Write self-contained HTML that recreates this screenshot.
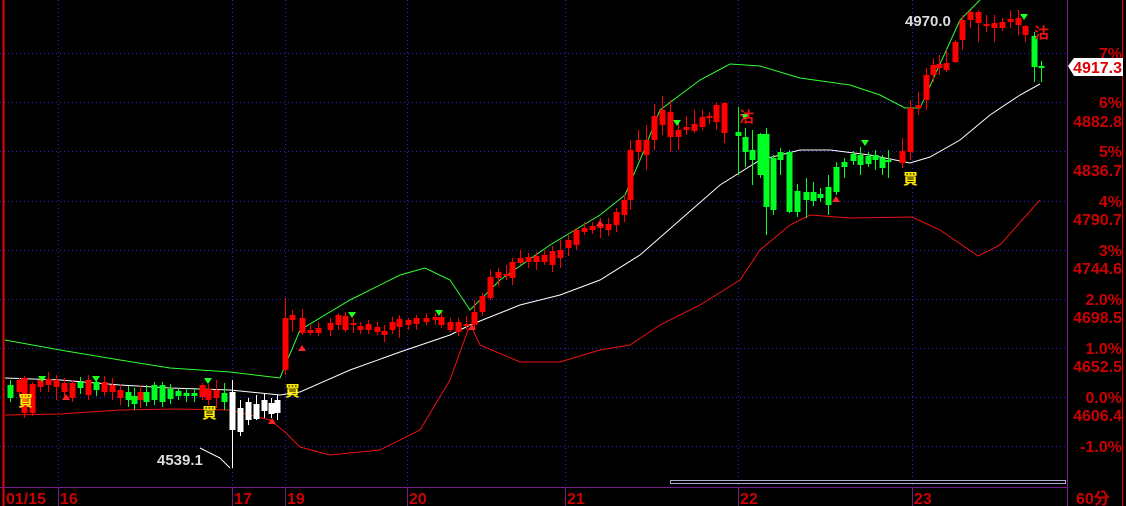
<!DOCTYPE html>
<html><head><meta charset="utf-8"><style>
html,body{margin:0;padding:0;background:#000;width:1126px;height:506px;overflow:hidden}
svg{display:block}
text{font-family:"Liberation Sans","Noto Sans CJK TC",sans-serif;font-weight:bold}
</style></head><body>
<svg id="s" width="1126" height="506" xmlns="http://www.w3.org/2000/svg">
<rect width="1126" height="506" fill="#000"/>
<g stroke="#2222dd" stroke-width="1" stroke-dasharray="1,3">
<line x1="0" y1="53.5" x2="1067" y2="53.5"/><line x1="0" y1="102.5" x2="1067" y2="102.5"/>
<line x1="0" y1="151.5" x2="1067" y2="151.5"/><line x1="0" y1="201.5" x2="1067" y2="201.5"/>
<line x1="0" y1="250.5" x2="1067" y2="250.5"/><line x1="0" y1="299.5" x2="1067" y2="299.5"/>
<line x1="0" y1="348.5" x2="1067" y2="348.5"/><line x1="0" y1="397.5" x2="1067" y2="397.5"/>
<line x1="0" y1="446.5" x2="1067" y2="446.5"/>
<line x1="58.5" y1="0" x2="58.5" y2="487"/><line x1="232.5" y1="0" x2="232.5" y2="487"/>
<line x1="285.5" y1="0" x2="285.5" y2="487"/><line x1="407.5" y1="0" x2="407.5" y2="487"/>
<line x1="565.5" y1="0" x2="565.5" y2="487"/><line x1="738.5" y1="0" x2="738.5" y2="487"/>
<line x1="912.5" y1="0" x2="912.5" y2="487"/>
</g>
<line x1="3.5" y1="0" x2="3.5" y2="506" stroke="#e00" stroke-width="2"/>
<line x1="0" y1="487.5" x2="1067" y2="487.5" stroke="#7a1a8a"/>
<line x1="1067.5" y1="0" x2="1067.5" y2="506" stroke="#7a1a8a"/>
<line x1="1122.5" y1="0" x2="1122.5" y2="506" stroke="#e00"/>
<g stroke="#7a1a8a"><line x1="58.5" y1="487" x2="58.5" y2="506"/><line x1="232.5" y1="487" x2="232.5" y2="506"/><line x1="285.5" y1="487" x2="285.5" y2="506"/><line x1="407.5" y1="487" x2="407.5" y2="506"/><line x1="565.5" y1="487" x2="565.5" y2="506"/><line x1="738.5" y1="487" x2="738.5" y2="506"/><line x1="912.5" y1="487" x2="912.5" y2="506"/></g>
<rect x="670.5" y="480.5" width="395" height="3" fill="none" stroke="#aac" />
<polyline fill="none" stroke="#33ff33" points="5,340 60,350 120,360 170,368 230,372 280,378 300,330 350,300 400,275 425,268 450,280 470,310 500,280 550,245 600,215 625,195 640,160 660,110 700,80 730,64 760,66 800,78 850,85 880,95 905,108 920,108 960,20 980,0"/>
<polyline fill="none" stroke="#ee1111" points="5,415 60,414 120,410 175,409 230,410 270,420 285,432 300,447 330,455 380,450 420,430 450,380 468,330 472,328 480,345 520,362 560,362 600,350 630,345 660,325 700,305 740,280 760,250 790,225 810,215 850,218 912,217 940,230 978,256 1000,245 1040,200"/>
<polyline fill="none" stroke="#fff" points="5,378 60,380 120,385 170,388 230,390 280,395 300,392 350,370 400,352 450,335 470,325 520,305 560,295 600,280 640,255 680,220 720,185 760,160 800,150 830,150 870,155 910,163 930,157 960,140 990,115 1020,95 1040,84"/>
<g id="c"></g>
<g fill="#22ff22"><polygon points="38,376 46,376 42,382"/><polygon points="92,376 100,376 96,382"/><polygon points="204,378 212,378 208,384"/><polygon points="348,312 356,312 352,318"/><polygon points="435,310 443,310 439,316"/><polygon points="673,120 681,120 677,126"/><polygon points="741,114 749,114 745,120"/><polygon points="861,140 869,140 865,146"/><polygon points="1020,14 1028,14 1024,20"/></g>
<g fill="#ff2222"><polygon points="62,400 70,400 66,394"/><polygon points="298,351 306,351 302,345"/><polygon points="468,330 476,330 472,324"/><polygon points="596,226 604,226 600,220"/><polygon points="832,202 840,202 836,196"/><polygon points="268,424 276,424 272,418"/></g>
<polyline points="200,448 220,458 230,468" fill="none" stroke="#fff"/>
<text x="157" y="465" fill="#ddd" font-size="15">4539.1</text>
<text x="905" y="26" fill="#ddd" font-size="15">4970.0</text>
<g fill="#ffee00" font-size="15"><text x="18" y="406">買</text><text x="202" y="418">買</text><text x="285" y="396">買</text><text x="903" y="184">買</text></g>
<g fill="#ee1111" font-size="15"><text x="739" y="122">沽</text><text x="1034" y="38">沽</text></g>
<g fill="#cc0000" font-size="16" text-anchor="end">
<text x="1122" y="59">7%</text><text x="1122" y="108">6%</text><text x="1122" y="127">4882.8</text>
<text x="1122" y="157">5%</text><text x="1122" y="176">4836.7</text>
<text x="1122" y="207">4%</text><text x="1122" y="225">4790.7</text>
<text x="1122" y="256">3%</text><text x="1122" y="274">4744.6</text>
<text x="1122" y="305">2.0%</text><text x="1122" y="323">4698.5</text>
<text x="1122" y="354">1.0%</text><text x="1122" y="372">4652.5</text>
<text x="1122" y="403">0.0%</text><text x="1122" y="421">4606.4</text>
<text x="1122" y="452">-1.0%</text>
</g>
<polygon points="1068,66 1074,58 1123,58 1123,76 1074,76" fill="#fff"/>
<text x="1122" y="73" fill="#dd0000" font-size="16" text-anchor="end">4917.3</text>
<g fill="#cc0000" font-size="16"><text x="6" y="504">01/15</text><text x="60" y="504">16</text><text x="234" y="504">17</text><text x="287" y="504">19</text><text x="409" y="504">20</text><text x="567" y="504">21</text><text x="740" y="504">22</text><text x="914" y="504">23</text><text x="1076" y="504">60分</text></g>
</svg>
<script>
var d=[[10,385,398,380,402,'g'],[19,380,392,378,396,'r'],[24,378,413,376,418,'r'],[32,384,413,382,416,'r'],[40,380,387,376,392,'r'],[48,379,385,372,392,'r'],[56,380,387,375,400,'r'],[64,383,392,378,398,'r'],[72,383,398,380,402,'r'],[80,382,388,377,394,'g'],[88,380,395,375,400,'r'],[96,382,390,376,396,'g'],[104,382,392,376,396,'r'],[112,385,392,378,400,'r'],[120,390,398,385,405,'r'],[128,392,400,386,407,'g'],[134,396,404,388,410,'g'],[140,392,400,385,408,'r'],[146,392,402,385,406,'g'],[154,385,400,382,405,'g'],[162,385,402,382,407,'g'],[170,389,399,384,404,'g'],[178,391,396,388,400,'g'],[186,393,396,388,402,'g'],[194,393,396,388,402,'g'],[202,385,397,383,400,'r'],[208,389,400,384,405,'r'],[216,390,398,380,408,'r'],[224,393,402,383,410,'g'],
[232,392,430,380,468,'w'],[240,408,432,400,436,'w'],[248,402,420,398,425,'w'],[256,404,419,395,420,'w'],[264,400,411,393,418,'w'],[271,403,414,398,418,'w'],[277,400,413,395,420,'w'],
[285,318,370,298,375,'r'],[292,315,320,310,332,'r'],[302,318,333,309,335,'r'],[310,330,333,325,335,'r'],[318,328,333,322,336,'r'],[330,323,330,318,336,'r'],[338,315,325,313,330,'r'],[345,316,330,312,332,'r'],[353,323,325,318,333,'r'],[360,326,330,322,334,'r'],[368,324,330,320,334,'r'],[377,327,332,322,335,'r'],[384,331,335,325,342,'r'],[392,322,330,317,334,'r'],[399,319,327,315,338,'r'],[408,320,325,318,330,'r'],[416,318,324,315,330,'r'],[426,318,322,313,325,'r'],[435,317,320,313,325,'r'],[441,317,325,312,328,'r'],[450,322,330,318,332,'r'],[458,322,332,318,336,'r'],[466,324,326,316,330,'r'],[474,312,325,300,330,'r'],[482,296,312,293,316,'r'],[490,277,298,270,300,'r'],[498,272,278,268,286,'r'],[506,274,276,265,280,'r'],[512,262,278,258,285,'r'],[520,258,263,250,265,'r'],[528,257,262,253,268,'r'],[536,256,262,252,270,'r'],[544,255,262,250,265,'r'],[552,251,265,246,272,'r'],[560,250,258,240,268,'r'],[568,240,248,235,256,'r'],[576,230,245,228,250,'r'],[584,228,232,222,235,'r'],[592,226,230,222,234,'r'],[600,224,228,218,238,'r'],[608,224,230,218,236,'r'],[616,212,225,208,232,'r'],[624,200,215,195,222,'r'],[630,150,200,140,210,'r'],[638,140,152,130,160,'r'],[646,140,155,125,170,'r'],[654,116,140,104,150,'r'],[662,110,125,96,135,'r'],[670,112,137,100,152,'r'],[678,130,137,120,150,'r'],[686,127,130,116,135,'r'],[694,124,131,110,133,'r'],[702,117,127,110,130,'r'],[709,116,118,112,124,'r'],[716,105,122,102,130,'r'],[724,103,133,102,143,'r'],
[738,132,136,107,175,'g'],[745,137,152,128,167,'g'],[752,150,160,130,185,'g'],[760,134,175,133,178,'g'],[766,134,207,128,235,'g'],[773,158,210,155,215,'g'],[780,152,160,148,175,'g'],[789,152,212,150,213,'g'],[797,191,212,184,217,'g'],[806,192,200,178,218,'g'],[813,192,201,182,206,'g'],[820,194,198,188,202,'g'],[828,187,205,175,215,'g'],[836,167,192,162,195,'g'],[844,162,167,158,178,'g'],[853,154,161,151,165,'g'],[860,155,165,147,175,'g'],[868,156,164,152,167,'g'],[875,155,160,150,170,'g'],[882,158,168,155,175,'g'],[888,160,162,150,178,'g'],
[902,151,163,138,168,'r'],[910,108,152,100,160,'r'],[918,105,108,92,115,'r'],[926,75,100,68,110,'r'],[933,65,75,58,82,'r'],[939,64,68,55,75,'r'],[946,63,70,50,72,'r'],[955,42,62,40,63,'r'],[962,20,40,15,50,'r'],[970,12,20,10,28,'r'],[978,12,23,10,42,'r'],[986,24,26,15,32,'r'],[994,23,28,15,42,'r'],[1002,22,28,18,31,'r'],[1010,19,22,10,28,'r'],[1018,18,25,10,35,'r'],[1025,26,35,25,42,'r'],[1034,36,67,32,82,'g'],[1041,66,68,61,82,'g']];
var col={r:'#ff0000',g:'#00ff22',w:'#ffffff'},h='';
d.forEach(function(a){var c=col[a[5]];h+='<line x1="'+(a[0]+0.5)+'" y1="'+a[3]+'" x2="'+(a[0]+0.5)+'" y2="'+a[4]+'" stroke="'+c+'"/>';h+='<rect x="'+(a[0]-2.5)+'" y="'+a[1]+'" width="6" height="'+Math.max(2,a[2]-a[1])+'" fill="'+c+'"/>';});
document.getElementById('c').innerHTML=h;
</script>
</body></html>
